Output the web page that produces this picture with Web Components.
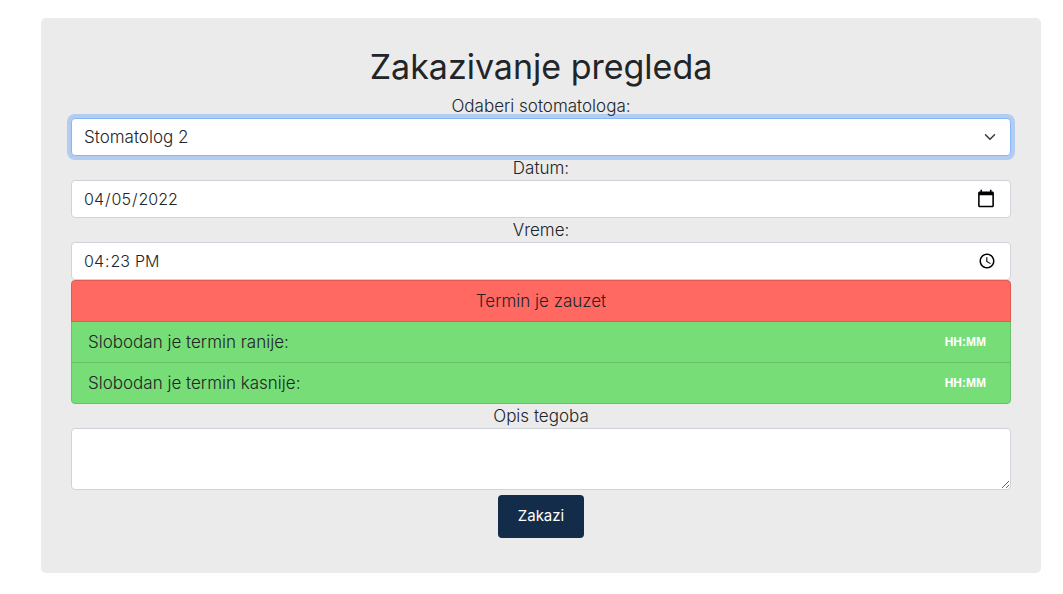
<!DOCTYPE html>
<html lang="sr-Latn">
<head>
<meta charset="utf-8">
<meta name="viewport" content="width=device-width, initial-scale=1">
<title>Zakazivanje pregleda</title>
<style>
  body {
    margin: 0;
    padding: 18px 22px 21px 41px;
    background: #fff;
    color: #212529;
    font: 300 17px/24px Inter, "Open Sans", sans-serif;
  }
</style>
</head>
<body>
<booking-card heading="Zakazivanje pregleda">
  <form-field kind="select" label="Odaberi sotomatologa:" value="Stomatolog 2" active></form-field>
  <form-field kind="date" label="Datum:" value="2022-04-05"></form-field>
  <form-field kind="time" label="Vreme:" value="16:23"></form-field>
  <slot-list>
    <slot-item tone="busy">Termin je zauzet</slot-item>
    <slot-item tone="free" time="HH:MM">Slobodan je termin ranije:</slot-item>
    <slot-item tone="free" time="HH:MM">Slobodan je termin kasnije:</slot-item>
  </slot-list>
  <form-field kind="textarea" label="Opis tegoba"></form-field>
  <submit-button>Zakazi</submit-button>
</booking-card>

<script>
class BookingCard extends HTMLElement {
  connectedCallback() {
    this.attachShadow({ mode: "open" }).innerHTML = `
      <style>
        :host { display: block; max-width: 1000px; box-sizing: border-box; padding: 30px 30px 35px;
                background: #ebebeb; border-radius: 5px; }
        h1 { margin: 0 0 8px; font-size: 34px; line-height: 38px; font-weight: 400; text-align: center; }
        form { display: flex; flex-direction: column; }
      </style>
      <h1></h1>
      <form><slot></slot></form>`;
    this.shadowRoot.querySelector("h1").textContent = this.getAttribute("heading");
  }
}

class FormField extends HTMLElement {
  connectedCallback() {
    const kind = this.getAttribute("kind");
    const value = this.getAttribute("value") || "";
    const controls = {
      select: `<span class="pick"><select id="control"><option>Stomatolog 1</option><option selected>${value}</option></select>
        <svg viewBox="0 0 16 16" width="16" height="12" aria-hidden="true"><path fill="none" stroke="#343a40" stroke-linecap="round" stroke-linejoin="round" stroke-width="2" d="m2 5 6 6 6-6"/></svg></span>`,
      date: `<input id="control" type="date" value="${value}">`,
      time: `<input id="control" type="time" value="${value}">`,
      textarea: `<textarea id="control" rows="2"></textarea>`
    };
    this.attachShadow({ mode: "open" }).innerHTML = `
      <style>
        :host { display: block; }
        label { display: block; text-align: center; }
        input, select, textarea {
          display: block; box-sizing: border-box; width: 100%; margin: 0; padding: 6px 12px;
          font: inherit; color: inherit; background: #fff; border: 1px solid #ced4da;
          border-radius: 4px; appearance: none; outline: 0;
        }
        input, select { height: 38px; }
        input { font-size: 16px; padding-left: 11px; padding-right: 14px; }
        input[type="date"]::-webkit-calendar-picker-indicator { width: 20px; height: 20px; padding: 0; }
        input[type="time"]::-webkit-calendar-picker-indicator { width: 18px; height: 18px; padding: 0; }
        select { padding-right: 36px; }
        textarea { height: 62px; resize: vertical; }
        select:focus, input:focus, textarea:focus, :host([active]) select {
          border-color: #86b7fe; box-shadow: 0 0 0 4px rgba(13, 110, 253, .25);
        }
        .pick { display: grid; align-items: center; }
        .pick > * { grid-area: 1 / 1; }
        .pick svg { justify-self: end; margin-right: 13px; pointer-events: none; }
      </style>
      <label for="control"></label>${controls[kind]}`;
    this.shadowRoot.querySelector("label").textContent = this.getAttribute("label");
  }
}

class SlotList extends HTMLElement {
  connectedCallback() {
    this.setAttribute("role", "list");
    this.attachShadow({ mode: "open" }).innerHTML = `
      <style>
        :host { display: flex; flex-direction: column; border-radius: 4px; overflow: hidden; }
        ::slotted(:first-child) { border-radius: 4px 4px 0 0; }
        ::slotted(:last-child) { border-radius: 0 0 4px 4px; }
      </style>
      <slot></slot>`;
  }
}

class SlotItem extends HTMLElement {
  connectedCallback() {
    this.setAttribute("role", "listitem");
    const time = this.getAttribute("time");
    this.attachShadow({ mode: "open" }).innerHTML = `
      <style>
        :host { display: flex; justify-content: space-between; align-items: center; padding: 8px 16px;
                border: 1px solid rgba(0, 0, 0, .125); }
        :host(:not(:first-child)) { border-top-width: 0; }
        :host([tone="busy"]) { justify-content: center; background: #ff6961; }
        :host([tone="free"]) { background: #77dd77; }
        .badge { padding: 4px 8px; color: #fff; font: 700 12px/12px "Liberation Sans", Arial, sans-serif; }
      </style>
      <slot></slot>${time ? `<span class="badge">${time}</span>` : ""}`;
  }
}

class SubmitButton extends HTMLElement {
  connectedCallback() {
    this.attachShadow({ mode: "open" }).innerHTML = `
      <style>
        :host { display: flex; justify-content: center; margin-top: 5px; }
        button { padding: 9px 19px 10px; border: 0; border-radius: 4px; background: #132c4a; color: #fff;
                 min-width: 86px; font: inherit; font-size: 15px; font-weight: 400; cursor: pointer; }
      </style>
      <button type="button"><slot></slot></button>`;
  }
}

customElements.define("booking-card", BookingCard);
customElements.define("form-field", FormField);
customElements.define("slot-list", SlotList);
customElements.define("slot-item", SlotItem);
customElements.define("submit-button", SubmitButton);
</script>
</body>
</html>
